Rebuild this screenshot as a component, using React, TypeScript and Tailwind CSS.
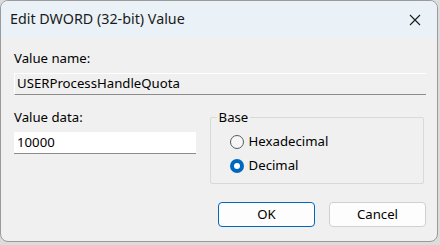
import React from "react";

export default function App() {
  const font = { fontFamily: '"Segoe UI", "Noto Sans", "Open Sans", sans-serif' };
  return (
    <div className="w-[440px] h-[245px] bg-[#dcdcdc] overflow-hidden" style={font}>
      <div className="w-[438px] h-[242px] rounded-[8px] border border-[#9a9a9a] bg-[#f0f0f0] overflow-hidden flex flex-col">
        <div className="h-[37px] bg-[#eaf2f7] flex items-center pl-[9px] pr-[15px] shrink-0">
          <span className="text-[14.3px] text-[#1a1a1a] flex-1 leading-none">Edit DWORD (32-bit) Value</span>
          <svg width="12" height="12" viewBox="0 0 12 12" className="mr-[1px]">
            <path d="M1 1 L11 11 M11 1 L1 11" stroke="#1a1a1a" strokeWidth="1.1" />
          </svg>
        </div>
        <div className="flex flex-col px-[13px] pt-[12px] text-[13.2px] text-[#000]">
          <div className="leading-[16px] h-[16px]">Value name:</div>
          <div className="mt-[7px] h-[22px] w-[412px] border-t border-l border-white border-b border-b-[#8c8c8c] bg-[#f0f0f0] flex items-center pl-[2px] leading-none">
            USERProcessHandleQuota
          </div>
          <div className="flex mt-[7px]">
            <div className="flex flex-col w-[197px]">
              <div className="leading-[16px] h-[16px] mt-[7px]">Value data:</div>
              <div className="mt-[7px] h-[22px] w-[182px] bg-white border-b border-[#8c8c8c] flex items-center pl-[3px] leading-none">
                10000
              </div>
            </div>
            <div className="relative w-[216px] h-[67px] mt-[15px] border border-[#d9d9d9] rounded-[2px]">
              <span className="absolute left-[6px] -top-[9px] px-[2px] bg-[#f0f0f0] leading-[16px]">Base</span>
              <div className="flex flex-col pl-[19px] pt-[17px] gap-[10px]">
                <div className="flex items-center gap-[5px] h-[14px]">
                  <span className="w-[14px] h-[14px] rounded-full border border-[#5a5a5a] bg-[#f6f6f6]" />
                  <span className="leading-none">Hexadecimal</span>
                </div>
                <div className="flex items-center gap-[5px] h-[14px]">
                  <span className="w-[14px] h-[14px] rounded-full bg-[#0067c0] flex items-center justify-center">
                    <span className="w-[6px] h-[6px] rounded-full bg-white" />
                  </span>
                  <span className="leading-none">Decimal</span>
                </div>
              </div>
            </div>
          </div>
          <div className="flex justify-end gap-[14px] mt-[18px] mr-[-2px]">
            <div className="w-[97px] h-[25px] rounded-[4px] border border-[#0067c0] bg-[#fdfdfd] flex items-center justify-center leading-none">OK</div>
            <div className="w-[97px] h-[25px] rounded-[4px] border border-[#d0d0d0] bg-[#fdfdfd] flex items-center justify-center leading-none">Cancel</div>
          </div>
        </div>
      </div>
    </div>
  );
}
